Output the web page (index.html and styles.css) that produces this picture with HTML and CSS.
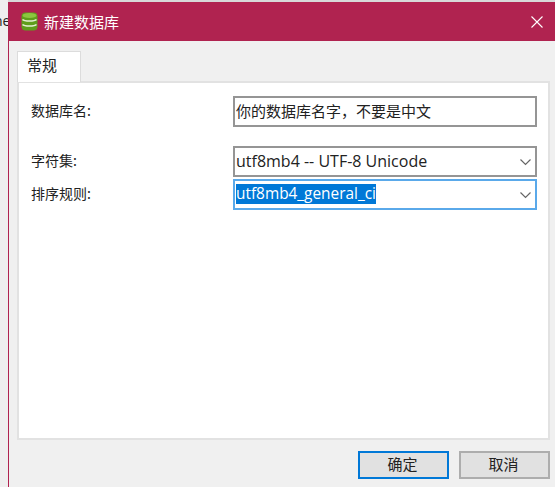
FILE: index.html
```html
<!DOCTYPE html>
<html lang="zh-CN">
<head>
    <meta charset="UTF-8">
    <title>新建数据库</title>
    <link rel="stylesheet" href="styles.css">
</head>
<body>
    <div class="backdrop"><span class="backdrop-text">ne</span></div>
    <div class="window">
        <div class="titlebar">
            <svg class="db-icon" width="17" height="19" viewBox="0 0 17 19">
                <rect x="0.5" y="0.5" width="16" height="18" rx="4" fill="#5f9e1c"/>
                <ellipse cx="8.5" cy="3.5" rx="7" ry="2.5" fill="#8cc63f"/>
                <path d="M1.5 7.5c2 2 12 2 14 0M1.5 12.5c2 2 12 2 14 0" fill="none" stroke="#e4efd2" stroke-width="1.6"/>
            </svg>
            <span class="title">新建数据库</span>
            <svg class="close" width="12" height="12" viewBox="0 0 12 12">
                <path d="M0.5 0.5l11 11M11.5 0.5l-11 11" stroke="#fff" stroke-width="1.1" fill="none"/>
            </svg>
        </div>
        <div class="content">
            <div class="tabs">
                <div class="tab">常规</div>
            </div>
            <div class="panel">
                <div class="row name-row">
                    <label>数据库名:</label>
                    <div class="field">你的数据库名字，不要是中文</div>
                </div>
                <div class="row">
                    <label>字符集:</label>
                    <div class="field select">
                        <span class="latin">utf8mb4 -- UTF-8 Unicode</span>
                        <svg class="chevron" width="11" height="7" viewBox="0 0 11 7"><path d="M0.5 0.5l5 5 5-5" fill="none" stroke="#666" stroke-width="1.2"/></svg>
                    </div>
                </div>
                <div class="row collation-row">
                    <label>排序规则:</label>
                    <div class="field select focused">
                        <span class="latin selected">utf8mb4_general_ci</span>
                        <svg class="chevron" width="11" height="7" viewBox="0 0 11 7"><path d="M0.5 0.5l5 5 5-5" fill="none" stroke="#666" stroke-width="1.2"/></svg>
                    </div>
                </div>
            </div>
            <div class="buttons">
                <button class="btn btn-default">确定</button>
                <button class="btn">取消</button>
            </div>
        </div>
    </div>
</body>
</html>
```

FILE: styles.css
```css
html, body {
    margin: 0;
    padding: 0;
    height: 487px;
    overflow: hidden;
}

body {
    display: flex;
    background-color: #f0f0f0;
    font-family: "Noto Sans CJK SC", sans-serif;
    font-size: 14px;
    color: #222;
}

/* Janela de tras */
.backdrop {
    width: 8px;
    flex: none;
    overflow: hidden;
    background-color: #efefef;
    padding-top: 12px;
}

.backdrop-text {
    display: block;
    margin-left: -6px;
    font-family: "Open Sans", sans-serif;
    font-size: 14px;
    line-height: 18px;
}

/* Janela do dialogo */
.window {
    flex: 1;
    margin-top: 2px;
    border-left: 1px solid #b02350;
    display: flex;
    flex-direction: column;
    background-color: #f0f0f0;
    box-shadow: 0 -2px 0 #d8d8d8;
}

.titlebar {
    height: 39px;
    flex: none;
    display: flex;
    align-items: center;
    padding-left: 12px;
    background-color: #b02350;
    color: white;
}

.db-icon {
    margin-right: 6px;
}

.title {
    font-size: 15px;
}

.close {
    margin-left: auto;
    margin-right: 12px;
}

.content {
    flex: 1;
    padding: 10px 5px 8px 8px;
    display: flex;
    flex-direction: column;
}

.tabs {
    display: flex;
    height: 30px;
}

.tab {
    width: 64px;
    height: 31px;
    box-sizing: border-box;
    border: 1px solid #dcdcdc;
    border-bottom: none;
    background-color: white;
    padding-left: 9px;
    line-height: 26px;
    font-size: 15px;
    position: relative;
    z-index: 1;
}

.panel {
    height: 359px;
    box-sizing: border-box;
    border: 2px solid #e2e2e2;
    background-color: white;
    padding: 13px 11px 0 12px;
}

.row {
    display: flex;
    align-items: center;
    height: 31px;
}

.name-row {
    margin-bottom: 19px;
}

.collation-row {
    margin-top: 2px;
}

label {
    width: 202px;
    flex: none;
    font-size: 14px;
    padding-bottom: 3px;
}

.field {
    flex: 1;
    height: 31px;
    box-sizing: border-box;
    border: 2px solid #959595;
    background-color: white;
    padding: 0 0 2px 1px;
    display: flex;
    align-items: center;
    font-size: 15px;
    white-space: nowrap;
}

.select {
    justify-content: space-between;
    padding-right: 4px;
}

.chevron {
    margin-top: 3px;
}

.focused {
    border-color: #5aa9ea;
}

.latin {
    font-family: "Open Sans", sans-serif;
    font-size: 16px;
}

.selected {
    background-color: #0078d7;
    color: white;
    font-size: 15.4px;
    line-height: 20px;
}

.buttons {
    display: flex;
    justify-content: flex-end;
    gap: 10px;
    margin-top: 11px;
}

.btn {
    width: 91px;
    height: 28px;
    box-sizing: border-box;
    border: 2px solid #adadad;
    background-color: #e1e1e1;
    font-family: "Noto Sans CJK SC", sans-serif;
    font-size: 15px;
    color: #222;
    padding: 0 2px 3px 0;
}

.btn-default {
    border-color: #0078d7;
}
```
